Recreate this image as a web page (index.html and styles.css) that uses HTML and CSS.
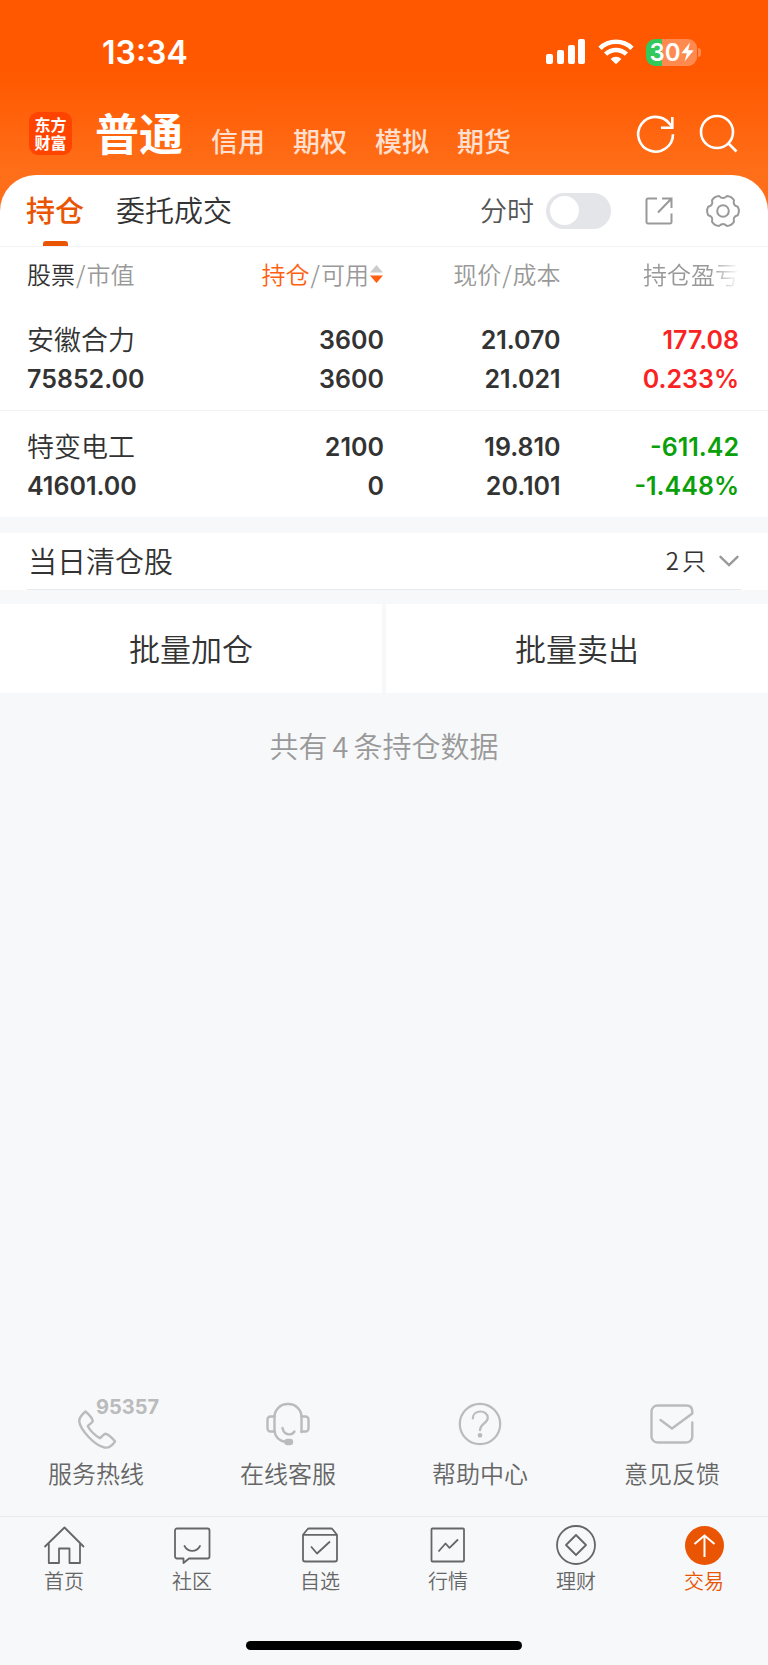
FILE: index.html
```html
<!DOCTYPE html>
<html lang="zh-CN">
<head>
<meta charset="utf-8">
<meta name="viewport" content="width=device-width, initial-scale=1">
<title>持仓</title>
<link rel="stylesheet" href="styles.css">
</head>
<body>
<div class="app">
  <header class="top">
    <div class="status">
      <span class="time">13:34</span>
      <div class="status-icons">
        <svg class="signal" width="40" height="26" viewBox="0 0 40 26" fill="#fff" aria-hidden="true"><rect x="0" y="15" width="7" height="10" rx="2"/><rect x="11" y="11" width="7" height="14" rx="2"/><rect x="22" y="6" width="7" height="19" rx="2"/><rect x="32" y="0" width="7" height="25" rx="2"/></svg>
        <svg class="wifi" width="36" height="26" viewBox="0 0 36 26" aria-hidden="true"><g fill="none" stroke="#fff" stroke-width="4.600"><path d="M2 9.300A23 23 0 0 1 34 9.300"/><path d="M7.600 15.200A15 15 0 0 1 28.400 15.200"/></g><path d="M12.600 19.900a8 8 0 0 1 10.800 0L18 25.300z" fill="#fff"/></svg>
        <span class="battery"><span class="battery-body">30<svg width="13" height="20" viewBox="0 0 13 20" fill="#fff" aria-hidden="true"><path d="M9 0.500 0.300 11.300h5.500L3.600 19.500 12.700 8.300H7.200z"/></svg></span><span class="battery-tip"></span></span>
      </div>
    </div>
    <div class="mainbar">
      <div class="logo"><span>东方</span><span>财富</span></div>
      <nav class="accounts">
        <a class="current" href="#">普通</a>
        <a href="#">信用</a>
        <a href="#">期权</a>
        <a href="#">模拟</a>
        <a href="#">期货</a>
      </nav>
      <div class="actions">
        <button type="button" aria-label="刷新"><svg width="40" height="40" viewBox="0 0 40 40" fill="none" stroke="#fff" stroke-width="2.600"><path d="M37 21.300A17.400 17.400 0 1 1 33.300 10.500L36 13.500"/><path d="M36.300 4V14.800H25"/></svg></button>
        <button type="button" aria-label="搜索"><svg width="40" height="40" viewBox="0 0 40 40" fill="none" stroke="#fff" stroke-width="2.600"><circle cx="18" cy="19" r="16"/><path d="M29 30 37.500 38.500"/></svg></button>
      </div>
    </div>
    <div class="tabs">
      <button type="button" class="tab active">持仓</button>
      <button type="button" class="tab">委托成交</button>
      <div class="tools">
        <label class="minute" for="minute">分时</label>
        <input id="minute" class="switch" type="checkbox" role="switch">
        <button type="button" class="share" aria-label="分享"><svg width="28" height="28" viewBox="0 0 28 28" fill="none" stroke="#999" stroke-width="2"><path d="M12 1.500H3a1.500 1.500 0 0 0-1.500 1.500v22A1.500 1.500 0 0 0 3 26.500h22a1.500 1.500 0 0 0 1.500-1.500V16.500"/><path d="M17 1.500h9.500V11M26.500 1.500 13 15.500"/></svg></button>
        <button type="button" class="gear" aria-label="设置"><svg width="34" height="34" viewBox="0 0 34 34" fill="none" stroke="#999" stroke-width="2" stroke-linejoin="round"><path d="M31.800 12.800Q34 17 31.800 21.200Q26.500 22.500 28 27.700Q25.500 31.700 20.800 31.900Q17 28 13.200 31.900Q8.500 31.700 6 27.700Q7.500 22.500 2.200 21.200Q0 17 2.200 12.800Q7.500 11.500 6 6.300Q8.500 2.300 13.200 2.100Q17 6 20.800 2.100Q25.500 2.300 28 6.300Q26.500 11.500 31.800 12.800Z"/><circle cx="17" cy="17" r="5.800"/></svg></button>
      </div>
    </div>
  </header>

  <main class="content">
    <table class="holdings">
      <colgroup><col class="c-name"><col class="c-qty"><col class="c-price"><col class="c-gain"></colgroup>
      <thead>
        <tr>
          <th scope="col"><span class="dark">股票</span><i>/</i>市值</th>
          <th scope="col"><span class="sort"><span class="hot">持仓</span><i>/</i>可用<svg width="15" height="20" viewBox="0 0 15 20" aria-hidden="true"><path d="M1 8.500 7.500 1 14 8.500z" fill="#ccc"/><path d="M1 11.500 7.500 19 14 11.500z" fill="#ff5f0f"/></svg></span></th>
          <th scope="col">现价<i>/</i>成本</th>
          <th scope="col"><span class="fade">持仓盈亏</span></th>
        </tr>
      </thead>
      <tbody>
        <tr>
          <td><span class="name">安徽合力</span><span>75852.00</span></td>
          <td><span>3600</span><span>3600</span></td>
          <td><span>21.070</span><span>21.021</span></td>
          <td class="up"><span>177.08</span><span>0.233%</span></td>
        </tr>
        <tr>
          <td><span class="name">特变电工</span><span>41601.00</span></td>
          <td><span>2100</span><span>0</span></td>
          <td><span>19.810</span><span>20.101</span></td>
          <td class="down"><span>-611.42</span><span>-1.448%</span></td>
        </tr>
      </tbody>
    </table>

    <button type="button" class="cleared">
      <span class="cleared-row"><span class="cleared-title">当日清仓股</span><span class="cleared-count"><span class="count">2<span>只</span></span><svg width="22" height="12" viewBox="0 0 22 12" fill="none" stroke="#999" stroke-width="2.400" stroke-linecap="round" aria-hidden="true"><path d="M2.500 1.800 11 10 19.500 1.800"/></svg></span></span>
    </button>

    <div class="batch">
      <button type="button">批量加仓</button>
      <button type="button">批量卖出</button>
    </div>
    <p class="summary">共有<span>4</span>条持仓数据</p>
  </main>

  <footer>
    <nav class="services">
      <a href="#"><span class="icon-box"><svg width="44" height="44" viewBox="0 0 44 44" fill="none" stroke="#bbb" stroke-width="2.400" stroke-linejoin="round" aria-hidden="true"><path d="M11.500 9.500C8.500 12 5.200 15.500 5.200 19.200C6 27.500 20.500 43.500 30.500 45.500C35 46.200 39 42.500 41 39.300Q34.500 32 31 31.800C29 32.500 27.500 35.500 26 36.200C21.500 34 16 28.500 13.800 24.200C14.800 22.500 18.500 21 18.800 18.800Q18 15 11.500 9.500Z"/></svg><span class="hotline">95357</span></span>服务热线</a>
      <a href="#"><span class="icon-box"><svg width="44" height="44" viewBox="0 0 44 44" fill="none" stroke="#bbb" stroke-width="2.400" stroke-linecap="round" stroke-linejoin="round" aria-hidden="true"><path d="M8.500 29.500V15A13 13 0 0 1 21.500 2h1A13 13 0 0 1 35.500 15v15"/><path d="M8.500 14.500H4.500a3 3 0 0 0-3 3v9a3 3 0 0 0 3 3h4M35.500 14.500h4a3 3 0 0 1 3 3v9a3 3 0 0 1-3 3h-4"/><path d="M8.500 29.500C9.500 35.500 14 39 19.500 40"/><path d="M16.500 26c1.500 8 9.500 7.500 12 3.500"/><rect x="19.500" y="38" width="6.500" height="4" rx="2" fill="#bbb"/></svg></span>在线客服</a>
      <a href="#"><span class="icon-box"><svg width="44" height="44" viewBox="0 0 44 44" fill="none" stroke="#bbb" stroke-width="2.200" stroke-linecap="round" aria-hidden="true"><circle cx="22" cy="22" r="20.200"/><path d="M14.800 16.500C14.800 7.300 29.800 7.300 29.800 15.800C29.800 21.500 22 21.500 22 28.200"/><circle cx="22" cy="33.300" r="1.300" fill="#bbb"/></svg></span>帮助中心</a>
      <a href="#"><span class="icon-box"><svg width="44" height="44" viewBox="0 0 44 44" fill="none" stroke="#bbb" stroke-width="2.400" stroke-linecap="round" stroke-linejoin="round" aria-hidden="true"><path d="M42.300 20.500V34.500a6 6 0 0 1-6 6H7.500a6 6 0 0 1-6-6V9.500a6 6 0 0 1 6-6H36.300c4 0 6 2.500 6 6V11.500L22 26.500 10.500 18"/></svg></span>意见反馈</a>
    </nav>
    <nav class="tabbar">
      <a href="#"><svg width="42" height="40" viewBox="0 0 42 40" fill="none" stroke="#666" stroke-width="1.800" stroke-linejoin="round" aria-hidden="true"><path d="M1.500 22 21.500 2.500 41 22M5.800 18.500V38H16V23.500H26.500V38H37V18.500"/></svg>首页</a>
      <a href="#"><svg width="42" height="40" viewBox="0 0 42 40" fill="none" stroke="#666" stroke-width="1.800" stroke-linejoin="round" stroke-linecap="round" aria-hidden="true"><path d="M6 3.500H36.500a2 2 0 0 1 2 2V31.500a2 2 0 0 1-2 2H18L12.500 38V33.500H6a2 2 0 0 1-2-2V5.500a2 2 0 0 1 2-2Z"/><path d="M13.500 21c3.500 6.500 12 6.500 15.500 0"/></svg>社区</a>
      <a href="#"><svg width="42" height="40" viewBox="0 0 42 40" fill="none" stroke="#666" stroke-width="1.800" stroke-linejoin="round" aria-hidden="true"><path d="M4 9.800V34.500a2 2 0 0 0 2 2H36a2 2 0 0 0 2-2V9.800L33.500 4.200Q33 3.500 32 3.500H10Q9 3.500 8.500 4.200ZM4 9.800H38M12 21.500 18 28.500 31 16.500"/></svg>自选</a>
      <a href="#"><svg width="42" height="40" viewBox="0 0 42 40" fill="none" stroke="#666" stroke-width="1.800" stroke-linejoin="round" aria-hidden="true"><rect x="4.500" y="3.500" width="32.500" height="33" rx="1"/><path d="M11.500 26.500 18.500 18.500 22.500 22.800 31 14.500"/></svg>行情</a>
      <a href="#"><svg width="42" height="40" viewBox="0 0 42 40" fill="none" stroke="#666" stroke-width="1.800" stroke-linejoin="round" aria-hidden="true"><circle cx="21" cy="20" r="19"/><path d="M21 10 31 20 21 30 11 20z"/></svg>理财</a>
      <a class="active" href="#"><svg width="42" height="40" viewBox="0 0 42 40" fill="none" stroke="#fff" stroke-width="2" aria-hidden="true"><circle cx="21.500" cy="20.500" r="19.500" fill="#ea5504" stroke="none"/><path d="M21.500 32V11M11.500 19 21.500 10.500 31.500 19"/></svg>交易</a>
    </nav>
    <div class="home-indicator"></div>
  </footer>
</div>
</body>
</html>
```
FILE: styles.css
```css
* { box-sizing: border-box; }

body {
  margin: 0;
  background: #f7f8fa;
  color: #333;
  font-family: "Noto Sans CJK SC", sans-serif;
  font-size: 24px;
  font-weight: 350;
}

a { color: inherit; text-decoration: none; }

button {
  margin: 0;
  padding: 0;
  border: 0;
  background: none;
  color: inherit;
  font: inherit;
}

svg { display: block; flex: none; overflow: visible; }

.app {
  display: flex;
  flex-direction: column;
  min-height: 100vh;
}

.top { background: linear-gradient(#ff5800 70px, #ff6f19 175px); }

.status {
  display: flex;
  justify-content: space-between;
  align-items: center;
  height: 104px;
  padding: 0 67px 0 102px;
  color: #fff;
  font-family: Inter, sans-serif;
}

.time { font-size: 32px; font-weight: 600; }

.status-icons { display: flex; align-items: center; gap: 12px; }

.battery { display: flex; align-items: center; gap: 1px; }

.battery-body {
  display: flex;
  align-items: center;
  justify-content: center;
  width: 51px;
  height: 27px;
  border-radius: 9px;
  background: linear-gradient(to right, #34c759 16px, #ff8a50 16px);
  font-size: 24px;
  font-weight: 600;
}

.battery-tip {
  width: 3px;
  height: 9px;
  border-radius: 0 4px 4px 0;
  background: #ff8a50;
}

.mainbar {
  display: flex;
  align-items: center;
  height: 58px;
  margin-bottom: 13px;
  padding: 0 29px;
  color: #fff;
}

.logo {
  display: grid;
  align-content: center;
  justify-items: center;
  width: 43px;
  height: 43px;
  border-radius: 9px;
  background: #ff4400;
  font-size: 16px;
  font-weight: 700;
  line-height: 18px;
}

.accounts {
  display: flex;
  flex: 1;
  align-items: flex-end;
  gap: 28px;
  padding: 0 0 3px 23px;
}

.accounts a {
  color: #ffe0d0;
  font-size: 27px;
  font-weight: 500;
  line-height: 40px;
}

.accounts .current {
  color: #fff;
  font-size: 44px;
  font-weight: 700;
  line-height: 58px;
}

.actions { display: flex; gap: 23px; }

.tabs {
  display: flex;
  align-items: stretch;
  gap: 32px;
  height: 72px;
  padding: 0 28px 0 26px;
  border-bottom: 1px solid #f2f2f4;
  border-radius: 36px 36px 0 0;
  background: #fff;
}

.tab { padding-bottom: 3px; font-size: 29px; }

.tab.active {
  display: grid;
  justify-items: center;
  align-items: center;
  position: relative;
  color: #ea5504;
  font-weight: 500;
}

.tab.active::after {
  content: "";
  position: absolute;
  bottom: 0;
  width: 25px;
  height: 5px;
  border-radius: 3px 3px 0 0;
  background: #ea5504;
}

.tools {
  display: flex;
  align-items: center;
  margin-left: auto;
  color: #555;
}

.minute { padding-bottom: 2px; font-size: 27px; }

.switch {
  display: grid;
  align-items: center;
  appearance: none;
  width: 65px;
  height: 36px;
  margin: 0 34px 0 12px;
  padding: 0 4px;
  border-radius: 18px;
  background: #e4e5e8;
}

.switch::before {
  content: "";
  width: 29px;
  height: 29px;
  border-radius: 50%;
  background: #fff;
}

.switch:checked { background: #ea5504; }
.switch:checked::before { justify-self: end; }

.gear { margin-left: 33px; }

.content { flex: 1; }

.holdings {
  width: 100%;
  border-collapse: collapse;
  table-layout: fixed;
  background: #fff;
}

.c-name { width: 26%; }
.c-qty { width: 24%; }
.c-price { width: 23%; }
.c-gain { width: 27%; }

.holdings th {
  height: 57px;
  padding: 0 0 3px;
  color: #999;
  font-weight: 350;
  line-height: 32px;
  text-align: right;
  white-space: nowrap;
}

.holdings th i { margin: 0 1px; font-style: normal; }

.holdings td {
  padding: 17px 0 11px;
  font-family: Inter, "Noto Sans CJK SC", sans-serif;
  font-size: 25px;
  font-weight: 600;
  line-height: 39px;
  text-align: right;
}

.holdings td span { display: block; }

.holdings th:first-child,
.holdings td:first-child { padding-left: 27px; text-align: left; }

.holdings th:last-child,
.holdings td:last-child { padding-right: 29px; }

.holdings tbody tr + tr { border-top: 1px solid #f2f2f4; }

.holdings .name {
  margin-bottom: 4px;
  font-family: "Noto Sans CJK SC", sans-serif;
  font-size: 27px;
  font-weight: 350;
  line-height: 35px;
}

.dark { color: #333; }
.hot { color: #ff5f0f; }

.sort {
  display: flex;
  align-items: center;
  justify-content: flex-end;
}

.fade {
  -webkit-mask-image: linear-gradient(to right, #000 70%, transparent);
  mask-image: linear-gradient(to right, #000 70%, transparent);
}

.holdings .up { color: #fa2323; }
.holdings .down { color: #0aa00a; }

.cleared {
  display: block;
  width: 100%;
  margin: 16px 0 14px;
  padding: 0 27px;
  background: #fff;
}

.cleared-row {
  display: flex;
  align-items: center;
  justify-content: space-between;
  height: 57px;
  padding: 0 1px;
  border-bottom: 1px solid #e9eaec;
}

.cleared-title { padding-bottom: 3px; font-size: 29px; }

.cleared-count { display: flex; align-items: center; gap: 12px; }

.count { display: flex; gap: 3px; padding-bottom: 3px; }

.batch {
  display: grid;
  grid-template-columns: 1fr 1fr;
  gap: 4px;
}

.batch button {
  height: 89px;
  padding-bottom: 3px;
  background: #fff;
  font-size: 31px;
}

.summary {
  margin: 32px 0;
  color: #999;
  font-size: 29px;
  line-height: 40px;
  text-align: center;
}

.summary span { margin: 0 5px; }

.services {
  display: grid;
  grid-template-columns: repeat(4, 1fr);
  padding-bottom: 25px;
  border-bottom: 1px solid #e9eaec;
  color: #666;
}

.services a {
  display: grid;
  justify-items: center;
  gap: 9px;
  line-height: 36px;
}

.icon-box { position: relative; }

.hotline {
  position: absolute;
  left: 22px;
  top: -7px;
  color: #bbb;
  font-family: Inter, sans-serif;
  font-size: 20px;
  font-weight: 700;
  line-height: 24px;
}

.tabbar {
  display: grid;
  grid-template-columns: repeat(6, 1fr);
  padding-top: 8px;
  color: #666;
  font-size: 20px;
  line-height: 32px;
}

.tabbar a { display: grid; justify-items: center; }

.tabbar .active { color: #ea5504; }

.home-indicator {
  width: 36%;
  height: 9px;
  margin: 44px auto 15px;
  border-radius: 5px;
  background: #000;
}
```
